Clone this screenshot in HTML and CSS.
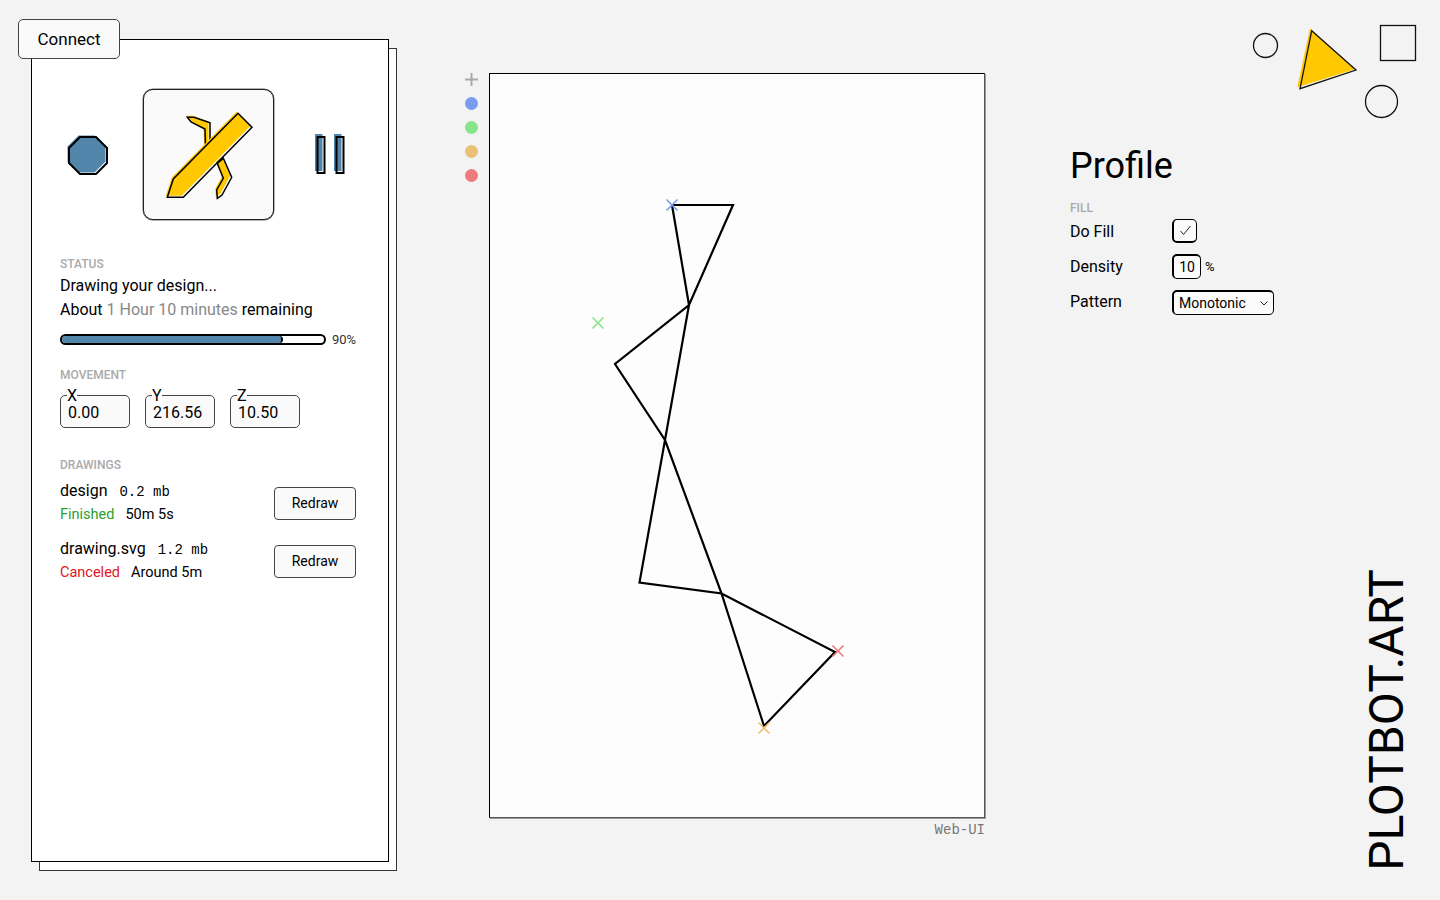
FILE: index.html
```html
<!DOCTYPE html>
<html lang="en">
<head>
  <meta charset="UTF-8">
  <title>Plotbot</title>
  <link rel="stylesheet" href="styles.css">
</head>
<body>
  <div class="layout">
    <aside class="panel">
      <button class="connect">Connect</button>

      <div class="actions">
        <svg class="icon-stop" width="41" height="41" viewBox="0 0 41 41">
          <polygon class="blue" points="11.5,1.5 27.5,1.5 38.5,12.5 38.5,27.5 27.5,38.5 11.5,38.5 0.5,27.5 0.5,12.5"/>
          <polygon class="line" points="13,3 29,3 40,14 40,29 29,40 13,40 2,29 2,14"/>
        </svg>
        <button class="start">
          <svg width="129" height="129" viewBox="0 0 129 129">
            <polygon class="yellow" points="41.8,25.8 48.5,25.8 64.5,31.2 64.5,50.5 60,55 59.5,37.5 45.5,30.5"/>
            <polygon class="line thin" points="43.3,27.3 50,27.3 66,32.7 66,52 61.5,56.5 61,39 47,32"/>
            <polygon class="yellow" points="71.8,71.8 77.8,66.8 86.2,85.8 76.5,103.5 71.8,106.8 71.2,98.5 77.8,86.8"/>
            <polygon class="line thin" points="73.3,73.3 79.3,68.3 87.7,87.3 78,105 73.3,108.3 72.7,100 79.3,88.3"/>
            <polygon class="yellow" points="92.5,21.8 106.5,35.8 37.8,105.8 21.8,105.8 27.8,87.5"/>
            <polygon class="line thin" points="94,23.3 108,37.3 39.3,107.3 23.3,107.3 29.3,89"/>
          </svg>
        </button>
        <svg width="32" height="41" viewBox="0 0 32 41">
          <rect class="blue" x="1" y="0" width="7.5" height="37"/>
          <rect class="blue" x="20" y="0" width="7.5" height="37"/>
          <rect class="line" x="3.5" y="3" width="7" height="36"/>
          <rect class="line" x="22.5" y="3" width="7" height="36"/>
        </svg>
      </div>

      <h3 class="label status-label">Status</h3>
      <p class="line-text">Drawing your design...</p>
      <p class="line-text">About <span class="muted">1 Hour 10 minutes</span> remaining</p>
      <div class="progress-row">
        <div class="progress"><div class="progress-fill" style="width: 83.5%"></div></div>
        <span class="progress-text">90%</span>
      </div>

      <h3 class="label movement-label">Movement</h3>
      <div class="coords">
        <div class="coord"><span class="coord-name">X</span>0.00</div>
        <div class="coord"><span class="coord-name">Y</span>216.56</div>
        <div class="coord"><span class="coord-name">Z</span>10.50</div>
      </div>

      <h3 class="label drawings-label">Drawings</h3>
      <div class="drawing">
        <div>
          <div class="drawing-name">design <span class="mono">0.2 mb</span></div>
          <div class="drawing-info"><span class="finished">Finished</span> <span>50m 5s</span></div>
        </div>
        <button class="redraw">Redraw</button>
      </div>
      <div class="drawing">
        <div>
          <div class="drawing-name">drawing.svg <span class="mono">1.2 mb</span></div>
          <div class="drawing-info"><span class="canceled">Canceled</span> <span>Around 5m</span></div>
        </div>
        <button class="redraw">Redraw</button>
      </div>
    </aside>

    <div class="palette">
      <svg width="13" height="13" viewBox="0 0 13 13"><path class="plus" d="M6.5 0V13M0 6.5H13"/></svg>
      <span class="dot dot-blue"></span>
      <span class="dot dot-green"></span>
      <span class="dot dot-orange"></span>
      <span class="dot dot-red"></span>
    </div>

    <main class="preview">
      <svg class="sheet" width="496" height="745" viewBox="0 0 494 743">
        <polyline class="plot" points="182,131 243,131 199,231 125,290 175,366 231.5,519.5 345,578 274,652 231.5,519.5 149.5,508.5 175,366 199,231 182,131"/>
        <path class="mark mark-blue" d="M176.5 125.5L187.5 136.5M187.5 125.5L176.5 136.5"/>
        <path class="mark mark-green" d="M102.5 243.5L113.5 254.5M113.5 243.5L102.5 254.5"/>
        <path class="mark mark-orange" d="M268.5 648.5L279.5 659.5M279.5 648.5L268.5 659.5"/>
        <path class="mark mark-red" d="M342.5 571.5L353.5 582.5M353.5 571.5L342.5 582.5"/>
      </svg>
      <div class="web-ui">Web-UI</div>
    </main>

    <section class="profile">
      <h1>Profile</h1>
      <h3 class="label fill-label">Fill</h3>
      <div class="field">
        <span>Do Fill</span>
        <div class="box check">
          <svg width="13" height="11" viewBox="0 0 13 11"><path d="M1.5 6L4.5 9.5L11.5 1"/></svg>
        </div>
      </div>
      <div class="field">
        <span>Density</span>
        <div class="box density">10</div><span class="unit">%</span>
      </div>
      <div class="field">
        <span>Pattern</span>
        <div class="select-wrap">
          <select class="box pattern">
            <option>Monotonic</option>
          </select>
          <svg class="chevron" width="8" height="5" viewBox="0 0 8 5"><path d="M0.5 0.5L4 4L7.5 0.5"/></svg>
        </div>
      </div>
    </section>
  </div>

  <svg class="shapes" width="190" height="120" viewBox="0 0 190 120">
    <circle class="shape" cx="25.5" cy="35.5" r="12"/>
    <polygon class="yellow" points="70,18.3 115,59.3 57.3,77.3"/>
    <polygon class="shape" points="71.7,20.7 116,60 60,78.7"/>
    <rect class="shape" x="140.5" y="15.5" width="35" height="35"/>
    <circle class="shape" cx="141.5" cy="91.5" r="16"/>
  </svg>

  <div class="brand">PLOTBOT.ART</div>
</body>
</html>
```

FILE: styles.css
```css
body {
  margin: 0;
  height: 900px;
  overflow: hidden;
  background: #f3f3f3;
  color: #000;
  font-family: Roboto, sans-serif;
  font-size: 16px;
}

button {
  font-family: Roboto, sans-serif;
  color: #000;
  background: #fafafa;
  border: 1px solid #444;
  border-radius: 4px;
  padding: 0;
  cursor: pointer;
}

.layout {
  display: flex;
  align-items: flex-start;
}

/* left panel */
.panel {
  position: relative;
  box-sizing: border-box;
  width: 358px;
  height: 823px;
  margin: 39px 0 0 31px;
  padding: 0 32px 0 28px;
  background: #fff;
  border: 1px solid #000;
  box-shadow: 8px 9px 0 -1px #fff, 8px 9px 0 0 #333;
}

.connect {
  position: absolute;
  left: -14px;
  top: -21px;
  width: 102px;
  height: 40px;
  font-size: 17px;
  border-radius: 5px;
}

.actions {
  display: flex;
  align-items: center;
  height: 131px;
  margin-top: 49px;
  padding-left: 7px;
}

.start {
  display: flex;
  width: 131px;
  height: 131px;
  margin: 0 40px 0 35px;
  border-color: #222;
  border-radius: 10px;
  box-shadow: 0 0 0 0.5px #666;
}

.blue { fill: #5185aa; }
.yellow { fill: #ffc800; }

.line {
  fill: none;
  stroke: #000;
  stroke-width: 2;
}

.line.thin { stroke-width: 1.5; }

.label {
  margin: 0;
  font-size: 12px;
  line-height: 14px;
  font-weight: 500;
  color: #aaa;
  text-transform: uppercase;
}

.status-label { margin: 37px 0 3px; }
.movement-label { margin: 23px 0 13px; }
.drawings-label { margin: 30px 0 8px; }

.line-text {
  margin: 0;
  line-height: 24px;
}

.muted { color: #888; }

.progress-row {
  display: flex;
  align-items: center;
  margin-top: 12px;
  height: 11px;
}

.progress {
  box-sizing: border-box;
  flex: none;
  width: 266px;
  height: 11px;
  background: #fff;
  border: 2px solid #000;
  border-radius: 6px;
  overflow: hidden;
}

.progress-fill {
  height: 100%;
  background: #5185aa;
  border-right: 2px solid #000;
  border-radius: 0 4px 4px 0;
}

.progress-text {
  margin-left: 6px;
  font-size: 13px;
  color: #333;
}

.coords {
  display: flex;
  gap: 15px;
}

.coord {
  position: relative;
  box-sizing: border-box;
  width: 70px;
  height: 33px;
  padding-left: 7px;
  line-height: 33px;
  background: #fafafa;
  border: 1px solid #444;
  border-radius: 5px;
}

.coord-name {
  position: absolute;
  left: 6px;
  top: -8px;
  line-height: 16px;
  background: #fff;
}

.drawing {
  display: flex;
  justify-content: space-between;
  align-items: center;
  height: 46px;
  margin-bottom: 12px;
}

.drawing-name { line-height: 22px; }

.mono {
  margin-left: 8px;
  font-family: "Liberation Mono", monospace;
  font-size: 14px;
}

.drawing-info {
  display: flex;
  gap: 11px;
  font-size: 14.5px;
  line-height: 24px;
}

.finished { color: #2ca02c; }
.canceled { color: #e3141d; }

.redraw {
  width: 82px;
  height: 33px;
  font-size: 14px;
}

/* middle column */
.palette {
  display: flex;
  flex-direction: column;
  align-items: center;
  gap: 11px;
  width: 13px;
  margin: 73px 11px 0 76px;
}

.plus {
  fill: none;
  stroke: #aaa;
  stroke-width: 2;
}

.dot {
  width: 13px;
  height: 13px;
  border-radius: 50%;
}

.dot-blue { background: #7a9cf0; }
.dot-green { background: #86e58a; }
.dot-orange { background: #ebc077; }
.dot-red { background: #ee7b7b; }

.preview {
  margin-top: 73px;
}

.sheet {
  display: block;
  box-sizing: border-box;
  background: #fdfdfd;
  border: 1px solid #000;
  border-right-color: #555;
  border-bottom-color: #555;
  box-shadow: 1px 1px 0 #999;
}

.plot {
  fill: none;
  stroke: #000;
  stroke-width: 2.2;
}

.mark {
  fill: none;
  stroke-width: 1.6;
}

.mark-blue { stroke: #7a9cf0; }
.mark-green { stroke: #86e58a; }
.mark-orange { stroke: #ebc077; }
.mark-red { stroke: #ee7b7b; }

.web-ui {
  margin-top: 4px;
  text-align: right;
  font-family: "Liberation Mono", monospace;
  font-size: 14px;
  color: #777;
}

/* profile column */
.profile {
  margin: 144px 0 0 85px;
}

.profile h1 {
  margin: 0;
  font-size: 36px;
  line-height: 44px;
  font-weight: 400;
}

.fill-label { margin: 13px 0 -1px; }

.field {
  display: flex;
  align-items: center;
  height: 35px;
}

.field > span:first-child { width: 102px; }

.box {
  box-sizing: border-box;
  background: #fbfbfb;
  border: 1px solid #000;
  border-left-width: 2px;
  border-radius: 5px;
  font-family: Roboto, sans-serif;
}

.check {
  display: flex;
  align-items: center;
  justify-content: center;
  width: 25px;
  height: 24px;
  margin-bottom: 2px;
  border-bottom-width: 2px;
}

.check path {
  fill: none;
  stroke: #222;
  stroke-width: 1;
}

.density {
  width: 29px;
  height: 25px;
  border-top-width: 2px;
  font-size: 14px;
  line-height: 23px;
  text-align: center;
}

.unit {
  margin-left: 4px;
  font-size: 13px;
}

.select-wrap {
  position: relative;
  display: flex;
  margin-top: 2px;
}

.pattern {
  appearance: none;
  width: 102px;
  height: 25px;
  padding-left: 5px;
  border-top-width: 2px;
  font-size: 14px;
  color: #000;
}

.chevron {
  position: absolute;
  right: 6px;
  top: 11px;
  pointer-events: none;
}

.chevron path {
  fill: none;
  stroke: #222;
  stroke-width: 1;
}

/* decoration */
.shapes {
  position: absolute;
  left: 1240px;
  top: 10px;
}

.shape {
  fill: none;
  stroke: #111;
  stroke-width: 1.3;
}

.brand {
  position: absolute;
  right: 25px;
  bottom: 29px;
  writing-mode: vertical-rl;
  transform: rotate(180deg);
  font-size: 48px;
  line-height: 56px;
}
```
